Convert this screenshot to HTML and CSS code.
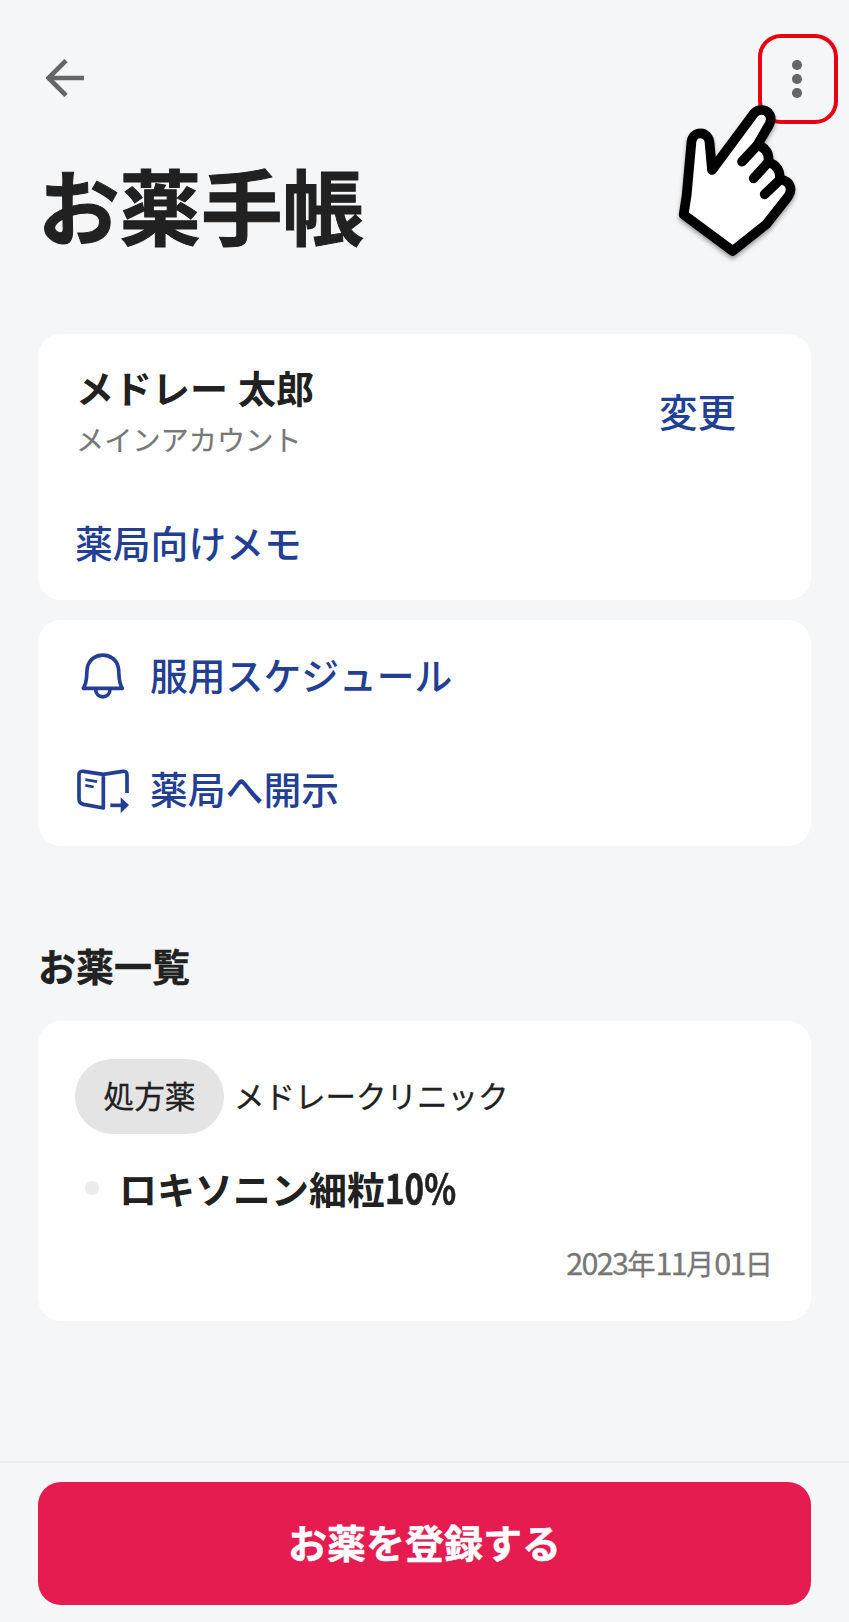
FILE: index.html
```html
<!DOCTYPE html>
<html lang="ja">
<head>
<meta charset="utf-8">
<title>お薬手帳</title>
<link rel="stylesheet" href="styles.css">
</head>
<body>
<div class="screen">
  <header class="topbar">
    <svg class="back" viewBox="0 0 38 38"><path d="M38 19H3M20 1.5L2.5 19L20 36.500" fill="none" stroke="#666" stroke-width="4.600"/></svg>
    <div class="menu">
      <i class="dot"></i><i class="dot"></i><i class="dot"></i>
    </div>
    <svg class="hand" viewBox="0 0 567 750">
      <path d="M71 584L218 693L319 613L384 530C399 509 390 488 374 482C365 479 359 480 359 480C363 455 350 433 325 427C329 400 316 380 291 377L327 315C340 291 326 271 306 270Q291 269 282 280L156 450L149 372C148 330 95 330 94 370L80 525Z" fill="#fff" stroke="#000" stroke-width="29" stroke-linejoin="round"/>
      <path d="M291 377L246 425M325 427L281 475M359 480L314 523" fill="none" stroke="#000" stroke-width="29" stroke-linecap="round"/>
    </svg>
  </header>
  <h1 class="title">お薬手帳</h1>

  <section class="card account">
    <div class="account-row">
      <div>
        <div class="name">メドレー<span class="given">太郎</span></div>
        <div class="kind">メインアカウント</div>
      </div>
      <a class="link change">変更</a>
    </div>
    <a class="link">薬局向けメモ</a>
  </section>

  <section class="card actions">
    <a class="link action">
      <svg class="icon" viewBox="0 0 156 150"><g fill="none" stroke="#233f94" stroke-width="11" stroke-linejoin="round"><path d="M19 109C33 86 27 69 31 47C41-3 114-3 124 47C128 69 122 86 136 109Z"/><path d="M56 112C56 142 99 142 99 112"/></g></svg>
      <span>服用スケジュール</span>
    </a>
    <a class="link action">
      <svg class="icon" viewBox="0 0 156 150"><g fill="none" stroke="#233f94" stroke-width="11" stroke-linejoin="round"><path d="M79 25L20 16Q6 14 6 27V98Q6 112 20 115L79 126ZM79 25L137 16Q150 14 150 27V81"/><path d="M25 41L60 47M25 58L50 63" stroke-width="8"/><path d="M100 118H132"/></g><path d="M131 94L156 117L131 142Z" fill="#233f94"/></svg>
      <span>薬局へ開示</span>
    </a>
  </section>

  <h2 class="heading">お薬一覧</h2>
  <section class="card medicine">
    <div class="clinic"><span class="pill">処方薬</span><span class="clinic-name">メドレークリニック</span></div>
    <div class="drug"><i class="bullet"></i><span class="drug-name">ロキソニン細粒<span class="dose">10%</span></span></div>
    <div class="date"><span class="num">2023</span>年<span class="num">11</span>月<span class="num">01</span>日</div>
  </section>

  <footer class="footer"><button class="register">お薬を登録する</button></footer>
</div>
</body>
</html>
```
FILE: styles.css
```css
* { box-sizing: border-box; }
body { margin: 0; background: #f4f6f8; color: #212121; font-family: "Noto Sans CJK JP", sans-serif; font-kerning: none; }
.screen { height: 1622px; display: flex; flex-direction: column; overflow: hidden; }
.topbar { position: relative; flex: none; height: 124px; margin-top: 34px; padding: 0 11px 0 46px; display: flex; justify-content: space-between; }
.back { width: 38px; height: 38px; margin-top: 25px; }
.menu { width: 80px; height: 90px; border: 4px solid #e90012; border-radius: 23px; display: flex; flex-direction: column; align-items: center; justify-content: center; gap: 4.500px; padding-right: 2px; }
.dot { width: 9.600px; height: 9.600px; border-radius: 50%; background: #666; }
.hand { position: absolute; left: 660px; top: -14px; width: 189px; height: 250px; filter: drop-shadow(0 3px 2px rgba(0,0,0,.35)); }
.title { margin: 0 0 0 38px; height: 176px; font-size: 81.500px; line-height: 91px; font-weight: 700; -webkit-text-stroke: 1px #212121; }
.card { flex: none; margin: 0 38px; width: 773px; border-radius: 23px; background: #fff; }
.link { display: block; color: #233f94; font-size: 37.800px; line-height: 50px; font-weight: 500; white-space: nowrap; }
.account { height: 266px; padding: 28px 75px 0 37px; }
.account-row { display: flex; justify-content: space-between; height: 155px; }
.name { margin-left: 1px; font-size: 38px; line-height: 50px; font-weight: 700; }
.given { margin-left: 10px; }
.kind { margin-left: 1px; font-size: 28.200px; line-height: 53px; color: #777; -webkit-text-stroke: .2px #777; }
.change { margin-top: 23px; font-size: 38.500px; }
.actions { height: 226px; margin-top: 20px; padding-top: 29px; display: flex; flex-direction: column; gap: 64px; }
.action { display: flex; align-items: center; gap: 21px; padding-left: 39px; }
.icon { width: 52px; height: 50px; margin-top: 3px; margin-bottom: -3px; }
.heading { margin: 94px 38px 0; height: 81px; font-size: 38px; line-height: 50px; font-weight: 700; -webkit-text-stroke: .4px #212121; }
.medicine { height: 300px; padding: 38px 38px 0 37px; }
.clinic { display: flex; align-items: center; gap: 10px; height: 75px; font-size: 30.500px; -webkit-text-stroke: .3px #212121; }
.clinic-name { margin-top: -3px; }
.pill { width: 149px; height: 75px; border-radius: 38px; background: #e4e4e4; text-align: center; line-height: 72px; font-size: 30.700px; }
.drug { display: flex; align-items: center; height: 50px; margin-top: 29px; padding-left: 10px; gap: 20px; font-size: 38px; line-height: 50px; font-weight: 700; }
.drug-name { margin-top: -3px; }
.bullet { width: 14px; height: 14px; border-radius: 50%; background: #ececec; }
.dose { display: inline-block; font-size: 41px; line-height: 50px; transform: scaleX(.81); transform-origin: left; -webkit-text-stroke: .6px #212121; }
.date { margin-top: 29px; text-align: right; color: #777; font-size: 28.200px; line-height: 40px; -webkit-text-stroke: .3px #777; }
.num { display: inline-block; font-size: 30.500px; line-height: 40px; letter-spacing: -1.650px; }
.footer { flex: none; margin-top: auto; height: 161px; border-top: 2px solid #e9ebed; padding: 19px 38px 0; }
.register { display: block; width: 773px; height: 123px; border: 0; border-radius: 23px; background: #e61c51; color: #fff; font: 700 39px/50px "Noto Sans CJK JP", sans-serif; font-kerning: none; padding: 0 0 5px; -webkit-text-stroke: .5px #fff; }
```
